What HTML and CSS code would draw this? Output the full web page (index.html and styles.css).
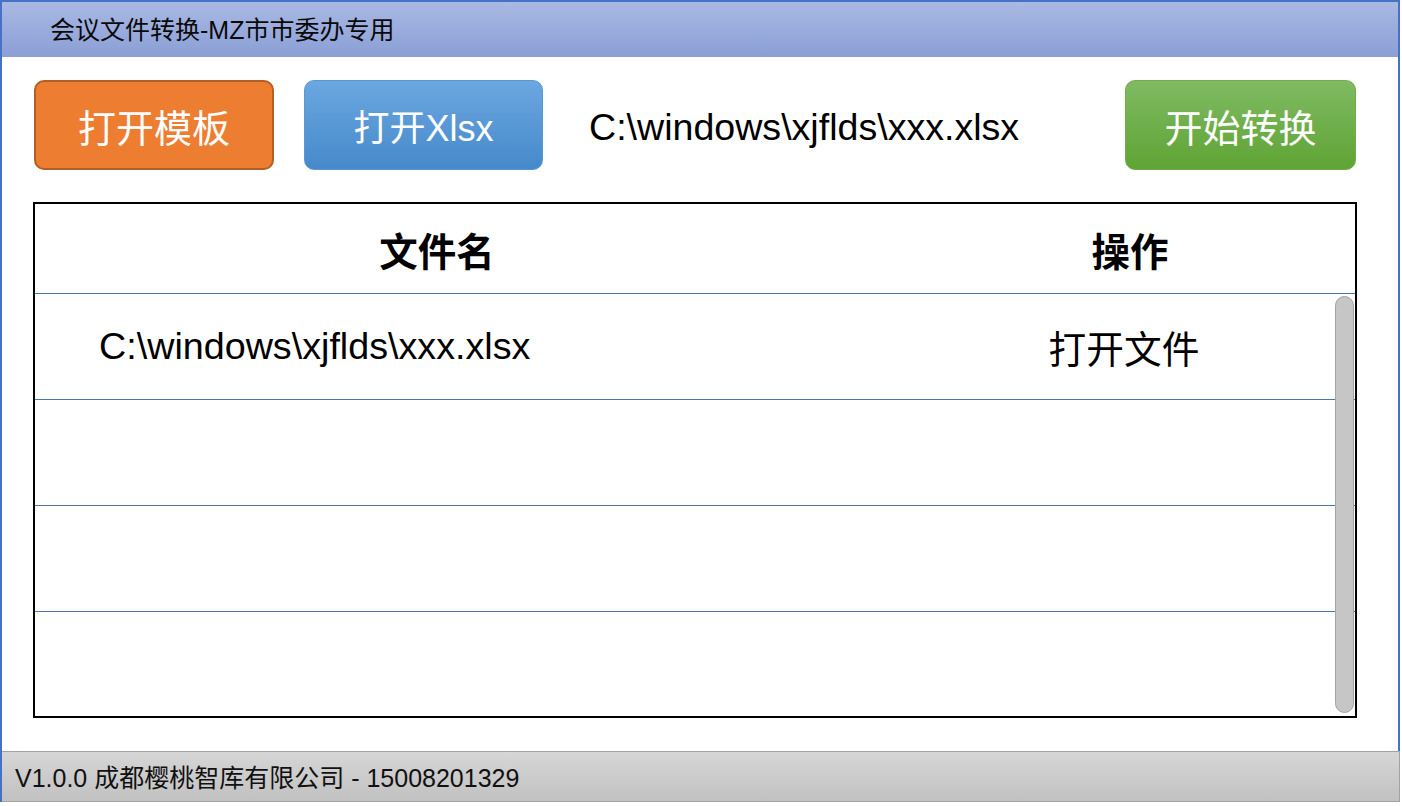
FILE: index.html
```html
<!DOCTYPE html>
<html lang="zh-CN">
<head>
<meta charset="utf-8">
<title>会议文件转换</title>
<link rel="stylesheet" href="styles.css">
</head>
<body>
<div class="window">
  <div class="titlebar">会议文件转换-MZ市市委办专用</div>
  <div class="content">
    <div class="toolbar">
      <button class="btn btn-orange">打开模板</button>
      <button class="btn btn-blue">打开Xlsx</button>
      <div class="path">C:\windows\xjflds\xxx.xlsx</div>
      <button class="btn btn-green">开始转换</button>
    </div>
    <div class="table">
      <div class="thead">
        <div class="th th-name">文件名</div>
        <div class="th th-op">操作</div>
      </div>
      <div class="tbody">
        <div class="row">
          <div class="td td-name">C:\windows\xjflds\xxx.xlsx</div>
          <div class="td td-op">打开文件</div>
        </div>
        <div class="row"><div class="td td-name"></div><div class="td td-op"></div></div>
        <div class="row"><div class="td td-name"></div><div class="td td-op"></div></div>
        <div class="row last"><div class="td td-name"></div><div class="td td-op"></div></div>
        <div class="scrollbar"></div>
      </div>
    </div>
  </div>
  <div class="footer">V1.0.0 成都樱桃智库有限公司 - 15008201329</div>
</div>
</body>
</html>
```

FILE: styles.css
```css
* { box-sizing: border-box; }
html, body {
  margin: 0;
  padding: 0;
  background: #ffffff;
}
body {
  width: 1402px;
  height: 806px;
  font-family: "Liberation Sans", "Noto Sans CJK SC", sans-serif;
  color: #000;
}
.window {
  width: 1400px;
  height: 802px;
  border: 2px solid #4472c4;
  border-bottom: none;
  display: flex;
  flex-direction: column;
  background: #fff;
}
.titlebar {
  height: 55px;
  flex: none;
  display: flex;
  align-items: center;
  padding-left: 48px;
  padding-bottom: 3px;
  font-size: 25px;
  color: #0a0a0a;
  background: linear-gradient(to bottom, #a9b9e3, #8b9fd6);
}
.content {
  flex: 1;
  padding: 23px 42px 0 31px;
  display: flex;
  flex-direction: column;
}
.toolbar {
  display: flex;
  align-items: center;
  height: 90px;
}
.btn {
  height: 90px;
  border-radius: 10px;
  font-family: "Liberation Sans", "Noto Sans CJK SC", sans-serif;
  font-size: 38px;
  color: #fff;
  padding: 0;
  cursor: pointer;
}
.btn-orange {
  width: 240px;
  margin-left: 1px;
  background: #ed7d31;
  border: 2px solid #b25f26;
}
.btn-blue {
  width: 239px;
  margin-left: 30px;
  background: linear-gradient(to bottom, #6ba7e1, #4689ca);
  border: 1px solid #5b98d3;
  font-size: 36px;
}
.path {
  margin-left: 46px;
  padding-top: 5px;
  font-size: 37.6px;
  color: #000;
}
.btn-green {
  width: 231px;
  margin-left: auto;
  background: linear-gradient(to bottom, #80ba63, #5fa434);
  border: 1px solid #70ad47;
}
.table {
  margin-top: 32px;
  width: 1324px;
  height: 516px;
  border: 2px solid #000;
  display: flex;
  flex-direction: column;
}
.thead {
  height: 90px;
  flex: none;
  display: grid;
  grid-template-columns: 804px 1fr;
  align-items: center;
  border-bottom: 1px solid #4f72b0;
}
.th {
  font-size: 38.5px;
  font-weight: bold;
  text-align: center;
}
.th-op {
  padding-left: 66px;
  text-align: center;
}
.td-op {
  padding-left: 54px;
  text-align: center;
  font-size: 38.5px;
}
.tbody {
  position: relative;
  flex: 1;
  display: flex;
  flex-direction: column;
}
.row {
  height: 106px;
  flex: none;
  display: grid;
  grid-template-columns: 804px 1fr;
  align-items: center;
  border-bottom: 1px solid #4f72b0;
}
.row.last {
  border-bottom: none;
  flex: 1;
}
.td {
  font-size: 37.7px;
}
.td-name {
  padding-left: 64px;
}
.scrollbar {
  position: absolute;
  right: 1px;
  top: 2px;
  bottom: 3px;
  width: 19px;
  border-radius: 10px;
  background: #c6c6c6;
  border: 1px solid #a3a3a3;
}
.footer {
  height: 51px;
  flex: none;
  margin-right: -2px;
  display: flex;
  align-items: center;
  padding-left: 13px;
  padding-bottom: 2px;
  font-size: 25px;
  color: #111;
  background: linear-gradient(to bottom, #d6d6d6, #c1c1c1);
  border-top: 1px solid #a2a2a2;
  border-bottom: 1px solid #a2a2a2;
  border-right: 1px solid #a2a2a2;
}
```
